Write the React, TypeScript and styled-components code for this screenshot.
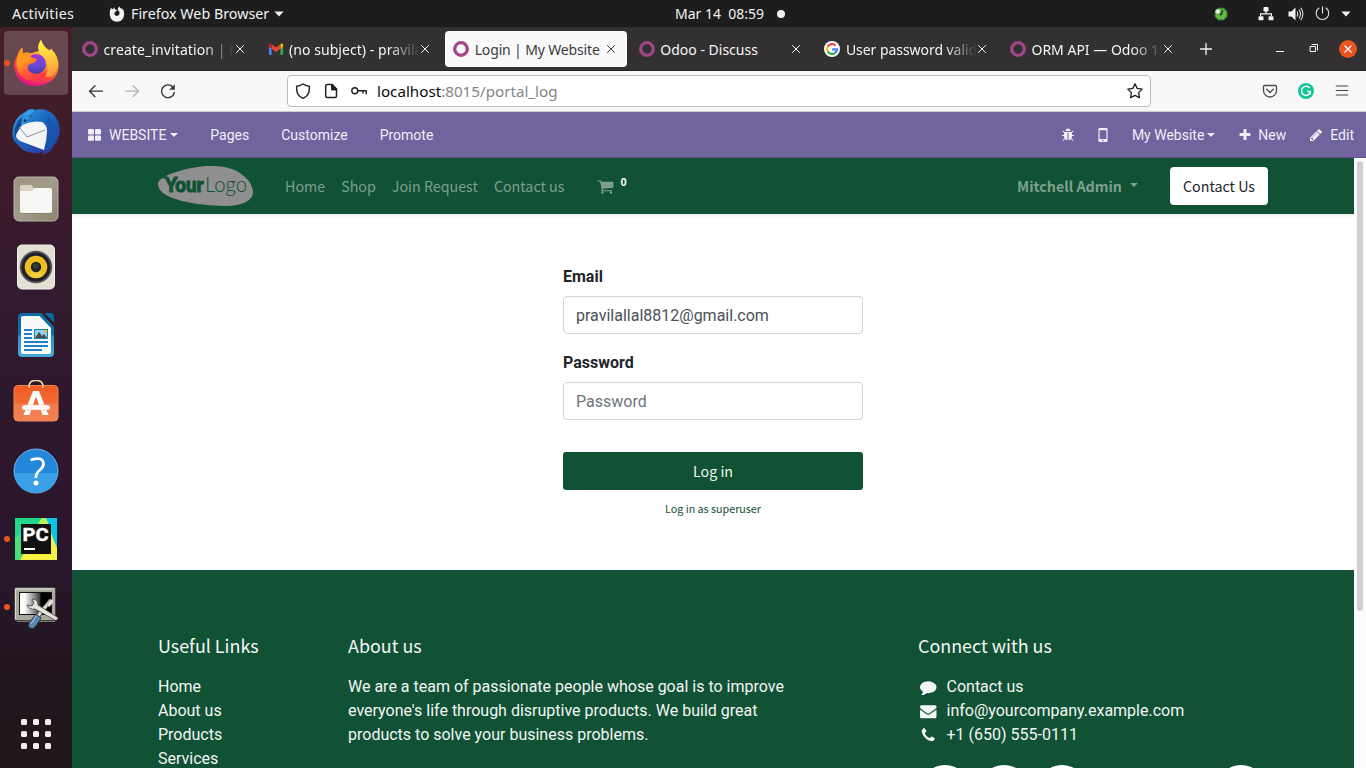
import React from "react";
import styled, { createGlobalStyle } from "styled-components";

const system = `"Noto Sans", "Open Sans", sans-serif`;
const display = `"Noto Sans CJK SC", "Noto Sans", sans-serif`;
const roboto = `Roboto, "Liberation Sans", sans-serif`;
const green = "#115234";

const GlobalStyle = createGlobalStyle`
  * { box-sizing: border-box; }
  body { margin: 0; overflow: hidden; background: #fff; }
  svg { display: block; flex: none; }
  a { color: inherit; text-decoration: none; }
  ul { list-style: none; margin: 0; padding: 0; }
`;

/* ---------- Desktop shell ---------- */
const Desktop = styled.div`
  width: 1366px; height: 768px; display: flex; flex-direction: column; overflow: hidden;
`;
const Panel = styled.header`
  height: 27px; flex: none; display: flex; align-items: center; background: #1d1d1d;
  color: #f2f2f2; font: 14.3px/27px ${system}; white-space: pre;
`;
const PanelLeft = styled.div`width: 675px; padding-left: 12px; display: flex; align-items: center;`;
const PanelCenter = styled.div`flex: 1; display: flex; align-items: center; gap: 13px; font-size: 14px;`;
const PanelRight = styled.div`display: flex; align-items: center; padding-right: 15px;`;
const PanelItem = styled.span<{ $w?: number; $track?: number }>`
  display: block; width: ${p => (p.$w ? `${p.$w}px` : "auto")}; letter-spacing: ${p => p.$track ?? 0}px;
`;
const Space = styled.span<{ $w: number }>`width: ${p => p.$w}px; flex: none;`;
const StatusDot = styled.i`width: 8px; height: 8px; border-radius: 50%; background: #f2f2f2;`;
const Workspace = styled.div`flex: 1; display: flex; min-height: 0;`;

const Dock = styled.nav`
  width: 72px; flex: none; display: flex; flex-direction: column; gap: 4px; padding: 4px 4px 2px;
  background: linear-gradient(180deg, #471f27 0%, #3c1a2b 20%, #331a2f 36%, #2d172d 55%, #28162a 74%, #22161e 88%, #21161b 100%);
`;
const DockItem = styled.div<{ $active?: boolean }>`
  height: 64px; flex: none; display: flex; align-items: center; justify-content: center; border-radius: 4px;
  position: relative; background: ${p => (p.$active ? "rgba(255,255,255,.19)" : "transparent")};
`;
const RunningDot = styled.i`
  position: absolute; left: 0; top: 29px; width: 6px; height: 6px; border-radius: 50%; background: #e95420;
`;
const AppsButton = styled.div`
  margin-top: auto; height: 64px; display: grid; grid-template-columns: repeat(3, 6px); gap: 6px;
  place-content: center;
`;
const AppsDot = styled.i`width: 6px; height: 6px; border-radius: 1.5px; background: #f1f0ef;`;

/* ---------- Browser ---------- */
const Browser = styled.main`flex: 1; min-width: 0; display: flex; flex-direction: column;`;
const TabStrip = styled.div`
  height: 44px; flex: none; display: flex; align-items: center; gap: 4px; padding: 0 0 0 2px;
  background: #323031; border-bottom: 1px solid #232122;
`;
const TabBox = styled.div<{ $active?: boolean }>`
  width: 181.6px; height: 36px; flex: none; display: flex; align-items: center; padding: 0 11px 0 8px;
  border-radius: 4px; color: ${p => (p.$active ? "#3b3b3b" : "#f5f5f5")};
  background: ${p => (p.$active ? "#f9f9f9" : "transparent")};
`;
const TabLabel = styled.span<{ $fade?: boolean; $track?: number }>`
  flex: 1; min-width: 0; margin: 2px 0 0 5.5px; overflow: hidden; white-space: nowrap;
  font: 14px/24px ${system}; letter-spacing: ${p => p.$track ?? 0}px;
  mask-image: ${p => (p.$fade ? "linear-gradient(90deg, #000 calc(100% - 32px), transparent)" : "none")};
`;
const IconCell = styled.span<{ $w?: number }>`
  width: ${p => p.$w ?? 36}px; flex: none; display: flex; align-items: center; justify-content: center;
`;
const WindowControls = styled.div`margin-left: auto; display: flex; align-items: center; padding-right: 1px; padding-top: 1px;`;
const Toolbar = styled.div`
  height: 41px; flex: none; display: flex; align-items: center; padding: 0 6px; background: #f8f8f8;
  border-bottom: 1px solid #cbcbcb;
`;
const UrlBar = styled.div`
  width: 864px; height: 32px; margin-left: 101px; margin-right: auto; padding: 0 1px; display: flex; align-items: center;
  border: 1px solid #bdbdbe; border-radius: 4px; background: #fff;
`;
const Url = styled.span`
  flex: 1; margin-left: 4px; font: 15.2px/28px ${system}; color: #858585;
  b { font-weight: 400; color: #0c0c0d; }
`;

/* ---------- Editor bar ---------- */
const EditorBar = styled.div`
  height: 46px; flex: none; display: flex; justify-content: space-between; padding-top: 1px; padding-right: 12px;
  background: #71639e; border-bottom: 1px solid #5f5486; color: #f0eef5; font: 14px/45px ${roboto};
`;
const EditorGroup = styled.div`display: flex; align-items: center;`;
const EditorLink = styled.a`display: flex; align-items: center; padding: 0 16px;`;
const EditorAction = styled.a<{ $left: number; $gap?: number }>`
  display: flex; align-items: center; margin-left: ${p => p.$left}px; gap: ${p => p.$gap ?? 0}px;
`;
const Caret = styled.i<{ $gap?: number; $up?: number }>`
  margin: ${p => -(p.$up ?? 0)}px 0 0 ${p => p.$gap ?? 3}px; border: 4px solid transparent; border-top-color: currentColor; border-bottom: 0;
`;

/* ---------- Site ---------- */
const Viewport = styled.div`flex: 1; min-height: 0; display: flex;`;
const Site = styled.div`width: 1282px; display: flex; flex-direction: column; overflow: hidden;`;
const Scrollbar = styled.div`flex: 1; padding: 3px 3px; background: #fcfcfc;`;
const Thumb = styled.div`height: 450px; width: 6px; border-radius: 3px; background: #d0d0d0;`;
const SiteNav = styled.header`
  height: 56px; flex: none; padding: 0 86px; display: flex; align-items: center; background: ${green};
  box-shadow: 0 2px 4px rgba(0,0,0,.075); color: #7da08d; font: 14.28px/24px ${display}; z-index: 1;
`;
const NavLinks = styled.nav`display: flex; align-items: center; margin-left: 24px;`;
const NavLink = styled.a`padding: 0 8px;`;
const CartCount = styled.sup`
  margin: -8px 0 0 6.5px; color: #fff; font: bold 10.5px/12px ${display};
`;
const UserMenu = styled.a`
  margin-left: auto; display: flex; align-items: center; font-weight: 700;
`;
const ContactButton = styled.button`
  width: 98px; height: 38px; margin-left: 32px; padding: 0; border: 0; border-radius: 4px; background: #fff; color: #212529;
  font: 14.28px/24px ${display};
`;
const LoginArea = styled.section`height: 356px; flex: none; display: flex; justify-content: center; padding-top: 51px; background: #fff;`;
const LoginForm = styled.form`width: 300px; display: flex; flex-direction: column;`;
const Label = styled.label`margin-bottom: 7px; color: #212529; font: 700 16px/24px ${roboto};`;
const Input = styled.input`
  height: 38px; flex: none; margin: 0 0 17px; padding: 0 12px; border: 1px solid #ced4da; border-radius: 4px; background: #fff;
  color: #495057; font: 16px/24px ${roboto}; outline: 0;
  &::placeholder { color: #6c757d; opacity: 1; }
`;
const Submit = styled.button`
  height: 38px; flex: none; margin-top: 15px; border: 0; border-radius: 3px; background: ${green}; color: #eef4f0;
  font: 14.28px/24px ${display};
`;
const SuperLink = styled.a`margin-top: 10px; text-align: center; color: ${green}; font: 10.72px/18px ${display};`;

const Footer = styled.footer`
  flex: 1; min-height: 0; display: flex; padding: 63px 71px 0; background: ${green}; color: #f3f6f4; font: 16px/24px ${roboto};
`;
const FooterColumn = styled.section<{ $w: number }>`width: ${p => p.$w}px; flex: none; padding: 0 15px;`;
const FooterTitle = styled.h5`margin: 0 0 18px; font: 17.9px/24px ${display};`;
const FooterText = styled.p`margin: 0;`;
const ContactRow = styled.li`display: flex; align-items: center; gap: 8px;`;
const SocialRow = styled.div`display: flex; gap: 10.5px; margin: 18px 0 0 3px;`;
const SocialCircle = styled.i<{ $push?: boolean }>`
  width: 48px; height: 48px; flex: none; border-radius: 50%; background: #fff; margin-left: ${p => (p.$push ? 120.5 : 0)}px;
`;

/* ---------- Glyphs ---------- */
const glyphs = {
  plus: "M1600 736v192q0 40-28 68t-68 28h-416v416q0 40-28 68t-68 28h-192q-40 0-68-28t-28-68v-416h-416q-40 0-68-28t-28-68v-192q0-40 28-68t68-28h416v-416q0-40 28-68t68-28h192q40 0 68 28t28 68v416h416q40 0 68 28t28 68z",
  pencil: "M491 1536l91-91-235-235-91 91v107h128v128h107zm523-928q0-22-22-22-10 0-17 7l-542 542q-7 7-7 17 0 22 22 22 10 0 17-7l542-542q7-7 7-17zm-54-192l416 416-832 832h-416v-416zm683 96q0 53-37 90l-166 166-416-416 166-165q36-38 90-38 53 0 91 38l235 234q37 39 37 91z",
  cart: "M704 1536q0 52-38 90t-90 38-90-38-38-90 38-90 90-38 90 38 38 90zm896 0q0 52-38 90t-90 38-90-38-38-90 38-90 90-38 90 38 38 90zm128-1088v512q0 24-16.5 42.5t-40.5 21.5l-1044 122q13 60 13 70 0 16-24 64h920q26 0 45 19t19 45-19 45-45 19h-1024q-26 0-45-19t-19-45q0-11 8-31.5t16-36 21.5-40 15.5-29.5l-177-823h-204q-26 0-45-19t-19-45 19-45 45-19h256q16 0 28.5 6.5t19.5 15.5 13 24.5 8 26 5.5 29.5 4.5 26h1201q26 0 45 19t19 45z",
  comment: "M1792 896q0 174-120 321.5t-326 233-450 85.5q-70 0-145-8-198 175-460 242-49 14-114 22-17 2-30.5-9t-17.5-29v-1q-3-4-.5-12t2-10 4.5-9.5l6-9 7-8.5 8-9q7-8 31-34.5t34.5-38 31-39.5 32.5-51 27-59 26-76q-157-89-247.5-220t-90.5-281q0-130 71-248.5t191-204.5 286-136.5 348-50.5q244 0 450 85.5t326 233 120 321.5z",
  envelope: "M1792 710v794q0 66-47 113t-113 47h-1472q-66 0-113-47t-47-113v-794q44 49 101 87 362 246 497 345 57 42 92.5 65.5t94.5 48 110 24.5h2q51 0 110-24.5t94.5-48 92.5-65.5q170-123 498-345 57-39 100-87zm0-294q0 79-49 151t-122 123q-376 261-468 325-10 7-42.5 31t-54 38.5-52 32.5-57.5 27-50 9h-2q-23 0-50-9t-57.5-27-52-32.5-54-38.5-42.5-31q-91-64-262-182.5t-205-142.5q-62-42-117-115.5t-55-136.5q0-78 41.5-130t118.5-52h1472q65 0 112.5 47t47.5 113z",
  phone: "M1600 1240q0 27-10 70.5t-21 68.5q-21 50-122 106-94 51-186 51-27 0-53-3.5t-57.5-12.5-47-14.5-55.5-20.5-49-18q-98-35-175-83-127-79-264-216t-216-264q-48-77-83-175-3-9-18-49t-20.5-55.5-14.5-47-12.5-57.5-3.5-53q0-92 51-186 56-101 106-122 25-11 68.5-21t70.5-10q14 0 21 3 18 6 53 76 11 19 30 54t35 63.5 31 53.5q3 4 17.5 25t21.5 35.5 7 28.5q0 20-28.5 50t-62 55-62 53-28.5 46q0 9 5 22.5t8.5 20.5 14 24 11.5 19q76 137 174 235t235 174q2 1 19 11.5t24 14 20.5 8.5 22.5 5q18 0 46-28.5t53-62 55-62 50-28.5q14 0 28.5 7t35.5 21.5 25 17.5q25 15 53.5 31t63.5 35 54 30q70 35 76 53 3 7 3 21z",
  bug: "M1696 960q0 26-19 45t-45 19h-224q0 171-67 290l208 209q19 19 19 45t-19 45q-18 19-45 19t-45-19l-198-197q-5 5-15 13t-42 28.5-65 36.5-82 29-97 13v-896h-128v896q-51 0-101.5-13.5t-87-33-66-39-43.5-32.5l-15-14-183 207q-20 21-48 21-24 0-43-16-19-18-20.5-44.5t15.5-46.5l202-227q-58-114-58-274h-224q-26 0-45-19t-19-45 19-45 45-19h224v-294l-173-173q-19-19-19-45t19-45 45-19 45 19l173 173h844l173-173q19-19 45-19t45 19 19 45-19 45l-173 173v294h224q26 0 45 19t19 45zm-480-576h-640q0-133 93.5-226.5t226.5-93.5 226.5 93.5 93.5 226.5z",
};
const Glyph = ({ name, size }: { name: keyof typeof glyphs; size: number }) => (
  <svg width={size} height={size} viewBox="0 0 1792 1792" fill="currentColor"><path d={glyphs[name]} /></svg>
);
const TilesIcon = () => (
  <svg width="13" height="12" viewBox="0 0 13 12" fill="currentColor">
    <rect width="6" height="5.4" rx="1" /><rect x="7" width="6" height="5.4" rx="1" />
    <rect y="6.4" width="6" height="5.4" rx="1" /><rect x="7" y="6.4" width="6" height="5.4" rx="1" />
  </svg>
);
const MobileIcon = () => (
  <svg width="10" height="16" viewBox="0 0 10 16">
    <path fill="currentColor" fillRule="evenodd" d="M1.6 1h6.8Q9.6 1 9.6 2.2v11.6Q9.6 15 8.4 15H1.6Q.4 15 .4 13.800V2.200Q.4 1 1.600 1zM1.600 3.300v8.800h6.800V3.300zM5 12.800a.8.8 0 1 0 0 1.600.8.8 0 0 0 0-1.600z" />
  </svg>
);

const OdooFavicon = () => (
  <svg width="16" height="16" viewBox="0 0 16 16"><circle cx="8" cy="8" r="6.300" fill="none" stroke="#a24689" strokeWidth="3.300" /></svg>
);
const GmailFavicon = () => (
  <svg width="16" height="16" viewBox="0 0 16 16">
    <path fill="#4285f4" d="M1 14h2.600V7.600L.9 5v8q0 1 .9 1z" /><path fill="#34a853" d="M12.400 14H14q1.100 0 1.100-1V5l-2.700 2.600z" />
    <path fill="#fbbc04" d="M12.400 3.600v4.100L15.100 5.600V4c0-1.700-1.700-2-2.700-1.100z" />
    <path fill="#ea4335" d="M3.600 7.700V3.200L8 6.500l4.400-3.300v4.500L8 11z" /><path fill="#c5221f" d="M.9 4v1.600l2.700 2.100V3C2.500 2 .9 2.400.9 4z" />
  </svg>
);
const GoogleFavicon = () => (
  <svg width="16" height="16" viewBox="0 0 16 16" fill="none" strokeWidth="2.200">
    <circle cx="8" cy="8" r="8" fill="#fff" />
    <path stroke="#ea4335" d="M11.600 4.500A5 5 0 0 0 3.700 5.500" /><path stroke="#fbbc05" d="M3.700 5.500a5 5 0 0 0 0 5" />
    <path stroke="#34a853" d="M3.700 10.500a5 5 0 0 0 7.500 1.300" /><path stroke="#4285f4" d="M11.200 11.800A5 5 0 0 0 13 8.300H8.100" />
  </svg>
);
const CloseMark = () => (
  <svg width="10" height="10" viewBox="0 0 10 10" stroke="currentColor" strokeWidth="1"><path d="M1.200 1.200l7.600 7.600M8.800 1.200l-7.600 7.600" /></svg>
);
const LineIcon = ({ children, size = 16, color = "#333", width = 1.300 }: { children: React.ReactNode; size?: number; color?: string; width?: number }) => (
  <svg width={size} height={size} viewBox="0 0 16 16" fill="none" stroke={color} strokeWidth={width} strokeLinecap="round" strokeLinejoin="round">{children}</svg>
);
const PanelCaret = () => <svg width="10" height="6" viewBox="0 0 10 6"><path d="M.4.5h9.200L5 5.500z" fill="#f2f2f2" /></svg>;

const PanelFirefox = () => (
  <svg width="16" height="16" viewBox="0 0 16 16">
    <path fill="#f2f2f2" d="M1.100 3.900 2.300 1.600 3 3.300 4.500 2.700 5 1.300l1.200 2.200 2 .8-1.500 1.200-1 .8-.4 1.700q.8 2 2.700 2 2.300-.2 2.600-2.400Q10.800 5.300 9.300 4.700L8.700 2.700 10.300.2q.4 1.700 2 2.600l.8-.5q2.500 2.700 2.100 6.100Q14.400 15.200 8 15.700 1.700 15.400.8 8.900.5 6.200 1.100 3.900z" />
  </svg>
);
const UpdateIcon = () => (
  <svg width="14" height="14" viewBox="0 0 14 14">
    <circle cx="7" cy="7" r="6.800" fill="#2b722e" /><circle cx="7" cy="7" r="6" fill="#64ba46" />
    <path d="M7 0v2M7 12v2M0 7h2M12 7h2M2 12l1.300-1.300M12 12l-1.300-1.300M12 2l-1.300 1.300" stroke="#1c3b20" strokeWidth="1" />
    <path d="M8.800 3 7.200 7.500" stroke="#15381a" strokeWidth="1.400" /><circle cx="3.700" cy="4.500" r="2.300" fill="#e5e8e2" /><circle cx="7" cy="7.400" r="1.100" fill="#15381a" />
  </svg>
);
const NetworkIcon = () => (
  <svg width="16" height="14" viewBox="0 0 16 14" fill="#f2f2f2">
    <rect x="5.500" y="0" width="5" height="4.500" rx=".8" /><rect x=".5" y="9.300" width="5" height="4" rx=".8" /><rect x="10.500" y="9.300" width="5" height="4" rx=".8" />
    <path d="M7.400 4h1.200v2.300H14v3h-1.200V7.500H3.200v1.800H2v-3h5.400z" />
  </svg>
);
const VolumeIcon = () => (
  <svg width="16" height="16" viewBox="0 0 16 16" fill="none" stroke="#d8d8d8" strokeWidth="1.100">
    <path d="M.5 5.500v5h3l4 4v-13l-4 4z" fill="#f2f2f2" stroke="none" /><path d="M9 5.500q1.500 2.500 0 5M11 3.600q3 4.400 0 8.800M12.800 1.800q4.200 6.200 0 12.400" />
  </svg>
);
const PowerIcon = () => (
  <svg width="15" height="15" viewBox="0 0 15 15" fill="none" stroke="#e8e8e8" strokeWidth="1.100"><path d="M4.300 1.800a6.300 6.300 0 1 0 6.400 0M7.500.5v7" /></svg>
);

/* ---------- Dock artwork ---------- */
const FirefoxLogo = () => (
  <svg width="46" height="48" viewBox="0 0 46 48">
    <defs>
      <linearGradient id="fxBody" x1=".8" y1="0" x2=".3" y2="1"><stop offset="0" stopColor="#fff44f" /><stop offset=".35" stopColor="#ffb52d" /><stop offset=".65" stopColor="#ff4b35" /><stop offset="1" stopColor="#e31587" /></linearGradient>
      <linearGradient id="fxTail" x1=".5" y1="0" x2=".6" y2="1"><stop offset="0" stopColor="#fff84f" /><stop offset=".5" stopColor="#ffc63d" /><stop offset="1" stopColor="#ff9538" /></linearGradient>
      <linearGradient id="fxGlobe" x1=".5" y1="0" x2=".5" y2="1"><stop offset="0" stopColor="#a832d8" /><stop offset=".5" stopColor="#6c49de" /><stop offset="1" stopColor="#493da5" /></linearGradient>
      <linearGradient id="fxHead" x1="0" y1="0" x2=".6" y2="1"><stop offset="0" stopColor="#ff8d20" /><stop offset=".4" stopColor="#ff9a1e" /><stop offset=".7" stopColor="#ff5838" /><stop offset="1" stopColor="#fb3a45" /></linearGradient>
    </defs>
    <path fill="url(#fxBody)" d="M4.500 17Q6 11 9.300 8.500l.7 6q4-1.500 8-.2L26 12q-2-5 1.500-11 4 8 9.500 10.500l1-2q8 8 7.500 18Q44 45 23.500 47 3 46 1 28q-.5-6 3.500-11z" />
    <path fill="url(#fxTail)" d="M28.500 1q.8 6.500 7 10.500 1.200 1.300 2.500-.5 7 8 6.500 17Q42 39 32.500 38 37 27 31 18.500 21 11 28.500 1z" />
    <circle cx="23" cy="25" r="10" fill="url(#fxGlobe)" />
    <path fill="url(#fxHead)" d="M4.500 17Q6 11 9.300 8.500q-.2 4 1.200 6Q14 12 18.500 15l-1 3 6.500 2q-1 4-5 4.500-5.500 1-4 6 4 6 11 5.500 5-.5 7.500-4Q31 42 20 42 8 41 4.500 31q-2-7 0-14z" />
    <path fill="#e61584" opacity=".65" d="M3 34q8 12 21 11 12 0 18-9-6 11-19 11Q9 47 3 34z" />
  </svg>
);
const ThunderbirdLogo = () => (
  <svg width="50" height="50" viewBox="0 0 50 50">
    <defs><linearGradient id="tb" x1="0" y1="0" x2=".8" y2="1"><stop offset="0" stopColor="#3ba2ea" /><stop offset=".45" stopColor="#176bc2" /><stop offset="1" stopColor="#343099" /></linearGradient></defs>
    <path fill="url(#tb)" d="M1.500 25Q3 11 14 6q4-4 9-3l-1 1.500Q35 .500 43 9q8 10 5 21l-3 8-1-1q-2 9-13 12l2-4Q23 50 12 44L3 35Q.8 30 1.500 25z" />
    <path fill="#0e4c91" d="M11 11q-9 8-7 20l6-12Q11 14 21 9 14 7 11 11z" />
    <path fill="#f4f5f7" d="m11 19q10-5 20-3 5 3 5 9 0 9-3 19L9 35Q3 31 6 27z" />
    <path fill="none" stroke="#8e9299" strokeWidth="1" d="m8 21 8 10 18-7" />
    <path fill="#1557ac" d="M36 16q6 8-1 20l-1 9q13-7 12-23l-9-12z" />
    <path fill="#3da6ec" d="M11 11q5-8 14-7-6 3-8 9l-6 7-1 0z" opacity=".75" /><circle cx="14" cy="14.500" r="1.200" fill="#0b2548" />
  </svg>
);
const FilesLogo = () => (
  <svg width="46" height="46" viewBox="0 0 46 46">
    <defs><linearGradient id="fileBg" x1="0" y1="0" x2="1" y2="1"><stop offset="0" stopColor="#9c947f" /><stop offset=".5" stopColor="#a39c8a" /><stop offset="1" stopColor="#8b8370" /></linearGradient></defs>
    <rect x="1" y="1" width="44" height="44" rx="5" fill="url(#fileBg)" stroke="#b9b3a4" />
    <path fill="#d9d4c5" d="M7 16V11q0-2 2-2h9l4 4v5H7z" />
    <path fill="#f8f7f5" d="M7 15h12l3-3h15q2 0 2 2v21q0 2-2 2H9q-2 0-2-2z" /><path stroke="#79715f" opacity=".5" d="M8 37.500h30" />
  </svg>
);
const SpeakerLogo = () => (
  <svg width="38" height="46" viewBox="0 0 38 46">
    <rect x=".5" y="1" width="37" height="44" rx="4.500" fill="#e4dfd3" stroke="#f4f1ea" />
    <circle cx="19" cy="23" r="16.200" fill="#56565a" /><circle cx="19" cy="23" r="14.500" fill="#20202c" /><circle cx="19" cy="23" r="11.300" fill="#eebd1f" />
    <path d="M19 23l7 8.800a11.300 11.300 0 0 1-14 0z" fill="#fad650" opacity=".6" /><circle cx="19" cy="23" r="5.200" fill="#23282b" /><circle cx="18.300" cy="22" r="2.500" fill="#3a3d40" />
  </svg>
);
const WriterLogo = () => (
  <svg width="38" height="46" viewBox="0 0 38 46">
    <defs><linearGradient id="writer" x1="0" y1="0" x2="0" y2="1"><stop offset=".48" stopColor="#0b6ba6" /><stop offset=".52" stopColor="#2b8ec4" /><stop offset="1" stopColor="#45a9db" /></linearGradient></defs>
    <path fill="url(#writer)" d="M5 1h19l13 14v26q0 4-4 4H5q-4 0-4-4V5q0-4 4-4zM27.500 1H33q4 0 4 4v5.500z" />
    <path fill="#fafafa" d="M6 4h16.500L34 16v24q0 2-2 2H6q-2 0-2-2V6q0-2 2-2z" />
    <path stroke="#1d83c4" strokeWidth="2" d="M7 18h8M7 22h8M7 26h8M7 30h24M7 34h24M7 38h18" />
    <path fill="#1c80b6" d="M17 17h14v10H17z" /><path fill="#8dd3ed" d="M18 18h12v8H18z" /><path fill="#4c4c4c" d="m18 26 4-6 3 4 2-2 3 4z" /><path fill="#f3b521" d="M27 18h3v3q-3 0-3-3z" />
  </svg>
);
const SoftwareLogo = () => (
  <svg width="46" height="46" viewBox="0 2 46 46">
    <defs><linearGradient id="soft" x1="0" y1="0" x2="0" y2="1"><stop offset="0" stopColor="#f15a22" /><stop offset=".5" stopColor="#f06a36" /><stop offset=".52" stopColor="#f27b4b" /><stop offset="1" stopColor="#f18452" /></linearGradient></defs>
    <rect x="1" y="7.500" width="44" height="35.500" rx="4" fill="url(#soft)" stroke="#f7854f" />
    <path fill="none" stroke="#f0d9a0" strokeWidth="1.600" d="M16 10V8.500q0-6 7-6t7 6V10" />
    <path fill="#fff" d="M20 13h6l9.500 24h-6L23 18.500 16.500 37h-6z" /><rect x="9" y="27" width="28" height="5" rx="2.500" fill="#fff" stroke="#e8a890" strokeWidth=".5" />
  </svg>
);
const HelpLogo = () => (
  <svg width="46" height="46" viewBox="0 0 46 46">
    <circle cx="23" cy="23" r="22" fill="#2388da" stroke="#6cb9ed" /><path fill="#3b9fe5" d="M1.500 25h43q-2 19.500-21.500 19.500T1.500 25z" />
    <path fill="none" stroke="#fff" strokeWidth="2.700" d="M17.500 12q13-4 13 4 0 3-3.500 6-4 3-4 7v1" /><circle cx="23" cy="35" r="2.500" fill="#fff" />
  </svg>
);
const PyCharmLogo = () => (
  <svg width="42" height="42" viewBox="0 0 42 42">
    <rect width="42" height="42" fill="#21d789" /><path fill="#05c8e9" d="M29 0h13v34L31 14z" /><path fill="#4adf7b" d="M0 20 14 8 8 42H0z" />
    <path fill="#b9f15b" d="m23 5 4-5h4l4 9-4 6z" /><path fill="#f8f243" d="m36 15 6 15v12H5l6-10 20-3z" />
    <rect x="6" y="6" width="30" height="30" fill="#111" />
    <text x="7.500" y="22.800" fill="#fff" stroke="#fff" strokeWidth=".4" fontFamily="Roboto, sans-serif" fontWeight="700" fontSize="18.500" textLength="26" lengthAdjust="spacingAndGlyphs">PC</text>
    <rect x="9" y="30" width="11" height="2" fill="#fff" />
  </svg>
);
const DisplayToolsLogo = () => (
  <svg width="48" height="48" viewBox="0 0 48 48">
    <defs><linearGradient id="screen"><stop offset=".15" stopColor="#fff" /><stop offset=".38" stopColor="#aaa" /><stop offset=".62" stopColor="#444" /><stop offset=".68" stopColor="#000" /></linearGradient></defs>
    <path fill="#77776f" d="M5 36h38v3H5z" /><rect x="2.500" y="4.500" width="41" height="33" rx="1.500" fill="#aaa99e" stroke="#45443e" />
    <path d="M4 6h38M3.500 6v30" stroke="#deddd3" /><rect x="7.500" y="9.500" width="32" height="22" fill="url(#screen)" stroke="#111" />
    <path stroke="#33332f" strokeWidth="4.500" d="m25 34 14-17" /><path stroke="#deded7" strokeWidth="3" d="m25 34 14-17" /><path fill="#e5e4df" stroke="#888" strokeWidth=".6" d="m35 22 3-5 4-1-1 4-4 4z" />
    <path fill="#5c86b0" stroke="#26394d" d="m24 31 5 4-5 8q-3 4-6 2t-1-5z" /><path stroke="#a8c5de" d="m24 33-5 8" />
    <path fill="#e5e4dd" stroke="#444" strokeWidth=".8" d="M20 16q6 0 6 6l19 12q2 1 0 3-2 1-4-1L23 26q-6 1-8-4l5 1 2-3z" />
  </svg>
);
const SiteLogo = () => (
  <svg width="95" height="40" viewBox="0 0 95 40">
    <path fill="#8f8f8f" d="M0 19C-1 14 7 9 20 5.500 38 0 50-.5 62 .5 81 2 95 15 95 26c0 9-12 14-27 14C39 39.500 2 34 0 19z" />
    <text x="7" y="25.700" fill={green} stroke={green} strokeWidth="1.200" fontFamily="Lato, sans-serif" fontWeight="900" fontSize="20.500" textLength="38.500" lengthAdjust="spacingAndGlyphs">Your</text>
    <text x="47" y="25.700" fill={green} fontFamily="Lato, sans-serif" fontWeight="300" fontSize="22" textLength="42" lengthAdjust="spacingAndGlyphs">Logo</text>
    <path stroke={green} strokeWidth="1.500" d="M4 11.500h5" />
  </svg>
);

/* ---------- Data ---------- */
const tabs = [
  { title: "create_invitation | My Website", Icon: OdooFavicon, fade: true, track: 0.1 },
  { title: "(no subject) - pravilallal", Icon: GmailFavicon, fade: true, track: 0.05 },
  { title: "Login | My Website", Icon: OdooFavicon, active: true, track: -0.15 },
  { title: "Odoo - Discuss", Icon: OdooFavicon, track: 0 },
  { title: "User password validation", Icon: GoogleFavicon, fade: true, track: -0.05 },
  { title: "ORM API — Odoo 15.0", Icon: OdooFavicon, fade: true, track: 0 },
];
const dock = [
  { Icon: FirefoxLogo, active: true, running: true }, { Icon: ThunderbirdLogo }, { Icon: FilesLogo }, { Icon: SpeakerLogo }, { Icon: WriterLogo },
  { Icon: SoftwareLogo }, { Icon: HelpLogo }, { Icon: PyCharmLogo, running: true }, { Icon: DisplayToolsLogo, running: true },
];

export default function App() {
  return (
    <Desktop>
      <GlobalStyle />
      <Panel>
        <PanelLeft>
          <PanelItem $w={97} $track={0.25}>Activities</PanelItem>
          <PanelFirefox /><Space $w={6} />
          <PanelItem $w={143}>Firefox Web Browser</PanelItem>
          <PanelCaret />
        </PanelLeft>
        <PanelCenter><PanelItem>Mar 14  08:59</PanelItem><StatusDot /></PanelCenter>
        <PanelRight>
          <UpdateIcon /><Space $w={30} /><NetworkIcon /><Space $w={14} /><VolumeIcon /><Space $w={11} /><PowerIcon /><Space $w={11} /><PanelCaret />
        </PanelRight>
      </Panel>
      <Workspace>
        <Dock>
          {dock.map(({ Icon, active, running }, i) => (
            <DockItem key={i} $active={active}>{running && <RunningDot />}<Icon /></DockItem>
          ))}
          <AppsButton>{Array.from({ length: 9 }, (_, i) => <AppsDot key={i} />)}</AppsButton>
        </Dock>
        <Browser>
          <TabStrip>
            {tabs.map(({ title, Icon, active, fade, track }) => (
              <TabBox key={title} $active={active}><Icon /><TabLabel $fade={fade} $track={track}>{title}</TabLabel><CloseMark /></TabBox>
            ))}
            <IconCell><LineIcon color="#f5f5f5"><path d="M2.500 8h11M8 2.500v11" /></LineIcon></IconCell>
            <WindowControls>
              <IconCell $w={34}><LineIcon color="#f5f5f5" size={16} width={1}><path d="M4 10.500h8" strokeLinecap="butt" /></LineIcon></IconCell>
              <IconCell $w={34}><LineIcon color="#f5f5f5" width={1}><path d="M4.500 5.500h5v5h-5zM6 3.500h5.500V9" strokeLinejoin="miter" /></LineIcon></IconCell>
              <IconCell $w={34}>
                <svg width="18" height="18" viewBox="0 0 18 18"><circle cx="9" cy="9" r="9" fill="#e95420" /><path d="M5.500 5.500l7 7M12.500 5.500l-7 7" stroke="#fff" strokeWidth="1.300" /></svg>
              </IconCell>
            </WindowControls>
          </TabStrip>
          <Toolbar>
            <IconCell><LineIcon><path d="M1.500 8.200h13M7 2.700 1.500 8.200 7 13.700" /></LineIcon></IconCell>
            <IconCell><LineIcon color="#b3b3b3"><path d="M14.500 8.200h-13M9 2.700l5.500 5.500L9 13.700" /></LineIcon></IconCell>
            <IconCell><LineIcon><path d="M14.300 9.500A6.400 6.400 0 1 1 12.800 4" /><path d="M14.500 2v4.500H10z" fill="#333" strokeWidth=".5" /></LineIcon></IconCell>
            <UrlBar>
              <IconCell $w={28}><LineIcon color="#202024" width={1.400}><path d="M8 1q3.300 2.200 6.400 2.300.3 7.300-3.100 10Q9 15 8 15.200 7 15 4.700 13.300 1.300 10.600 1.600 3.300 4.700 3.200 8 1z" /></LineIcon></IconCell>
              <IconCell $w={28}><LineIcon color="#202024" width={1.500}><path d="M2.700 3q0-1.500 1.500-1.500h5L13.500 6v7q0 1.500-1.500 1.500H4.200q-1.500 0-1.500-1.500zM9 2v4.500h4.500" /><path d="M9 2v4.500h4.500z" fill="#202024" /></LineIcon></IconCell>
              <IconCell $w={28}><LineIcon color="#202024" width={1.400}><circle cx="3.800" cy="7.800" r="3" /><path d="M7 7.800h8.300v3M12 8v2" /></LineIcon></IconCell>
              <Url><b>localhost</b>:8015/portal_log</Url>
              <IconCell $w={28}><LineIcon color="#202024"><path d="m8 .9 2.200 4.500 5 .7-3.600 3.500.8 5L8 12.300l-4.400 2.300.8-5L.8 6.100l5-.7z" /></LineIcon></IconCell>
            </UrlBar>
            <IconCell><LineIcon color="#4a4a4a"><path d="M2.500 2.500h11q1 0 1 1v4a6.500 6.500 0 0 1-13 0v-4q0-1 1-1zM4.700 6.300 8 9.500l3.300-3.200" /></LineIcon></IconCell>
            <IconCell>
              <svg width="16" height="16" viewBox="0 0 16 16"><circle cx="8" cy="8" r="8" fill="#15c39a" /><path d="M11.500 5A4.500 4.500 0 1 0 12 10M12.300 11.300V8.500H9.300" fill="none" stroke="#fff" strokeWidth="1.500" /></svg>
            </IconCell>
            <IconCell><LineIcon color="#444" width={1.200}><path d="M2.300 3h11.400M2.300 7.500h11.400M2.300 12h11.400" /></LineIcon></IconCell>
          </Toolbar>
          <EditorBar>
            <EditorGroup>
              <EditorLink><TilesIcon /><Space $w={8} />WEBSITE<Caret $gap={4} /></EditorLink>
              <EditorLink>Pages</EditorLink><EditorLink>Customize</EditorLink><EditorLink>Promote</EditorLink>
            </EditorGroup>
            <EditorGroup>
              <EditorAction $left={0}><Glyph name="bug" size={14} /></EditorAction>
              <EditorAction $left={23}><MobileIcon /></EditorAction>
              <EditorAction $left={24}>My Website<Caret /></EditorAction>
              <EditorAction $left={23} $gap={6}><Glyph name="plus" size={14} />New</EditorAction>
              <EditorAction $left={23} $gap={7}><Glyph name="pencil" size={14} />Edit</EditorAction>
            </EditorGroup>
          </EditorBar>
          <Viewport>
            <Site>
              <SiteNav>
                <SiteLogo />
                <NavLinks>
                  <NavLink>Home</NavLink><NavLink>Shop</NavLink><NavLink>Join Request</NavLink><NavLink>Contact us</NavLink>
                  <Space $w={24.5} /><Glyph name="cart" size={17} /><CartCount>0</CartCount>
                </NavLinks>
                <UserMenu>Mitchell Admin<Caret $gap={8} $up={3} /></UserMenu>
                <ContactButton>Contact Us</ContactButton>
              </SiteNav>
              <LoginArea>
                <LoginForm>
                  <Label htmlFor="login">Email</Label>
                  <Input id="login" defaultValue="pravilallal8812@gmail.com" />
                  <Label htmlFor="password">Password</Label>
                  <Input id="password" type="password" placeholder="Password" />
                  <Submit type="button">Log in</Submit>
                  <SuperLink>Log in as superuser</SuperLink>
                </LoginForm>
              </LoginArea>
              <Footer>
                <FooterColumn $w={190}>
                  <FooterTitle>Useful Links</FooterTitle>
                  <ul><li>Home</li><li>About us</li><li>Products</li><li>Services</li></ul>
                </FooterColumn>
                <FooterColumn $w={570}>
                  <FooterTitle>About us</FooterTitle>
                  <FooterText>We are a team of passionate people whose goal is to improve<br />everyone's life through disruptive products. We build great<br />products to solve your business problems.</FooterText>
                </FooterColumn>
                <FooterColumn $w={380}>
                  <FooterTitle>Connect with us</FooterTitle>
                  <ul>
                    <ContactRow><IconCell $w={20.5}><Glyph name="comment" size={16.5} /></IconCell>Contact us</ContactRow>
                    <ContactRow><IconCell $w={20.5}><Glyph name="envelope" size={16.5} /></IconCell>info@yourcompany.example.com</ContactRow>
                    <ContactRow><IconCell $w={20.5}><Glyph name="phone" size={16.5} /></IconCell>+1 (650) 555-0111</ContactRow>
                  </ul>
                  <SocialRow><SocialCircle /><SocialCircle /><SocialCircle /><SocialCircle $push /></SocialRow>
                </FooterColumn>
              </Footer>
            </Site>
            <Scrollbar><Thumb /></Scrollbar>
          </Viewport>
        </Browser>
      </Workspace>
    </Desktop>
  );
}
